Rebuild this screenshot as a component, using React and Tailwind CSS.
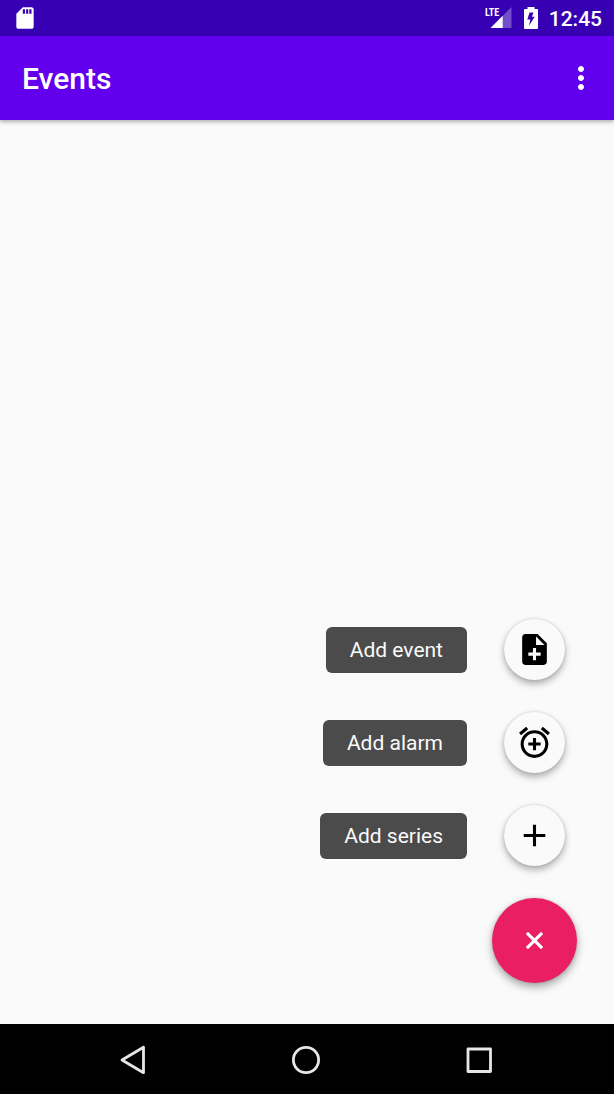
const ICONS = {
  event:
    "M14 2H6c-1.1 0-1.99.9-1.99 2L4 20c0 1.1.89 2 1.99 2H18c1.1 0 2-.9 2-2V8l-6-6zm2 14h-3v3h-2v-3H8v-2h3v-3h2v3h3v2zm-3-7V3.5L18.500 9H13z",
  alarm:
    "M7.88 3.39L6.6 1.86 2 5.71l1.290 1.530 4.590-3.850zM22 5.720l-4.600-3.860-1.290 1.530 4.600 3.860L22 5.720zM12 4c-4.970 0-9 4.030-9 9s4.020 9 9 9c4.970 0 9-4.030 9-9s-4.030-9-9-9zm0 16c-3.870 0-7-3.130-7-7s3.130-7 7-7 7 3.130 7 7-3.130 7-7 7zm1-11h-2v3H8v2h3v3h2v-3h3v-2h-3V9z",
  plus: "M19 13h-6v6h-2v-6H5v-2h6V5h2v6h6v2z",
};

const ACTIONS = [
  { id: "add-event", label: "Add event", icon: ICONS.event },
  { id: "add-alarm", label: "Add alarm", icon: ICONS.alarm },
  { id: "add-series", label: "Add series", icon: ICONS.plus },
];

function Icon({ d, className }) {
  return (
    <svg viewBox="0 0 24 24" fill="currentColor" aria-hidden="true" className={className}>
      <path d={d} />
    </svg>
  );
}

function StatusBar() {
  return (
    <div className="flex h-9 items-center justify-between bg-[#3700b3] px-3 text-white">
      <Icon
        className="size-[26px]"
        d="M18 2h-8L4.020 8 4 20c0 1.100.9 2 2 2h12c1.100 0 2-.9 2-2V4c0-1.100-.9-2-2-2zm-6 6h-2V4h2v4zm3 0h-2V4h2v4zm3 0h-2V4h2v4z"
      />
      <div className="flex items-center">
        <svg viewBox="0 0 27 22" className="mr-3 h-[22px] w-[27px]" aria-label="LTE signal">
          <path d="M5.500 21H26.500V0Z" fill="#fff" fillOpacity=".3" />
          <path d="M5.500 21H17.700V8.800Z" fill="#fff" />
          <text
            x="0"
            y="9"
            fill="#fff"
            className="font-['Liberation_Sans_Narrow','Roboto_Condensed','Roboto',sans-serif] text-[10px] font-bold"
          >
            LTE
          </text>
        </svg>
        <svg viewBox="0 0 14 22" className="mr-[11px] h-[22px] w-[14px]" aria-hidden="true">
          <path
            fill="#fff"
            fillRule="evenodd"
            d="M3.500 0H10.500V2H13Q14 2 14 3V21Q14 22 13 22H1Q0 22 0 21V3Q0 2 1 2H3.500ZM5.500 5.500L3.300 12.500H6.300L5 18.800L10.700 9.800H7.900L9.500 5.500Z"
          />
        </svg>
        <span className="pt-0.5 text-[21px] font-medium leading-6">12:45</span>
      </div>
    </div>
  );
}

function AppBar() {
  return (
    <header className="relative flex h-[84px] items-center justify-between bg-[#6200ee] pl-[22px] pr-[15px] text-white shadow-[0_2px_4px_rgba(0,0,0,0.3)]">
      <h1 className="pt-0.5 text-[30px] font-medium leading-9">Events</h1>
      <button type="button" aria-label="More options">
        <Icon
          className="size-9"
          d="M12 8c1.100 0 2-.9 2-2s-.9-2-2-2-2 .9-2 2 .9 2 2 2zm0 2c-1.100 0-2 .9-2 2s.9 2 2 2 2-.9 2-2-.9-2-2-2zm0 6c-1.100 0-2 .9-2 2s.9 2 2 2 2-.9 2-2-.9-2-2-2z"
        />
      </button>
    </header>
  );
}

function SpeedDial() {
  return (
    <div className="flex flex-col items-end gap-8">
      {ACTIONS.map(({ id, label, icon }) => (
        <div key={id} className="flex items-center gap-[37px] pr-3">
          <label
            htmlFor={id}
            className="rounded-md bg-[#4b4b4b] px-6 py-[11px] text-[21px] leading-6 text-[#fafafa]"
          >
            {label}
          </label>
          <button
            id={id}
            type="button"
            className="flex size-[61px] items-center justify-center rounded-full bg-[#fafafa] text-black shadow-[0_4px_7px_rgba(0,0,0,0.3),0_0_3px_rgba(0,0,0,0.15)]"
          >
            <Icon d={icon} className="size-[37px]" />
          </button>
        </div>
      ))}
      <button
        type="button"
        aria-label="Close menu"
        className="flex size-[85px] items-center justify-center rounded-full bg-[#e91e63] text-white shadow-[0_4px_8px_rgba(0,0,0,0.35),0_0_3px_rgba(0,0,0,0.15)]"
      >
        <Icon d={ICONS.plus} className="size-[37px] rotate-45" />
      </button>
    </div>
  );
}

function NavButton({ label, children }) {
  return (
    <button type="button" aria-label={label} className="flex flex-1 items-center justify-center">
      <svg
        viewBox="0 0 32 32"
        className="size-8"
        fill="none"
        stroke="#e6e6e6"
        strokeWidth="2.8"
        strokeLinejoin="round"
      >
        {children}
      </svg>
    </button>
  );
}

function NavigationBar() {
  return (
    <nav className="flex h-[70px] items-stretch bg-black pl-[46px] pr-12 pt-0.5">
      <NavButton label="Back">
        <path d="M26.500 3.300V28.700L5 16Z" />
      </NavButton>
      <NavButton label="Home">
        <circle cx="16" cy="16" r="12.600" />
      </NavButton>
      <NavButton label="Recent apps">
        <rect x="5" y="5" width="22.500" height="22.500" />
      </NavButton>
    </nav>
  );
}

export default function App() {
  return (
    <div className="flex min-h-screen flex-col bg-[#fafafa] font-['Roboto',sans-serif]">
      <StatusBar />
      <AppBar />
      <main className="flex flex-1 flex-col items-end justify-end pb-[41px] pr-[37px]">
        <SpeedDial />
      </main>
      <NavigationBar />
    </div>
  );
}
